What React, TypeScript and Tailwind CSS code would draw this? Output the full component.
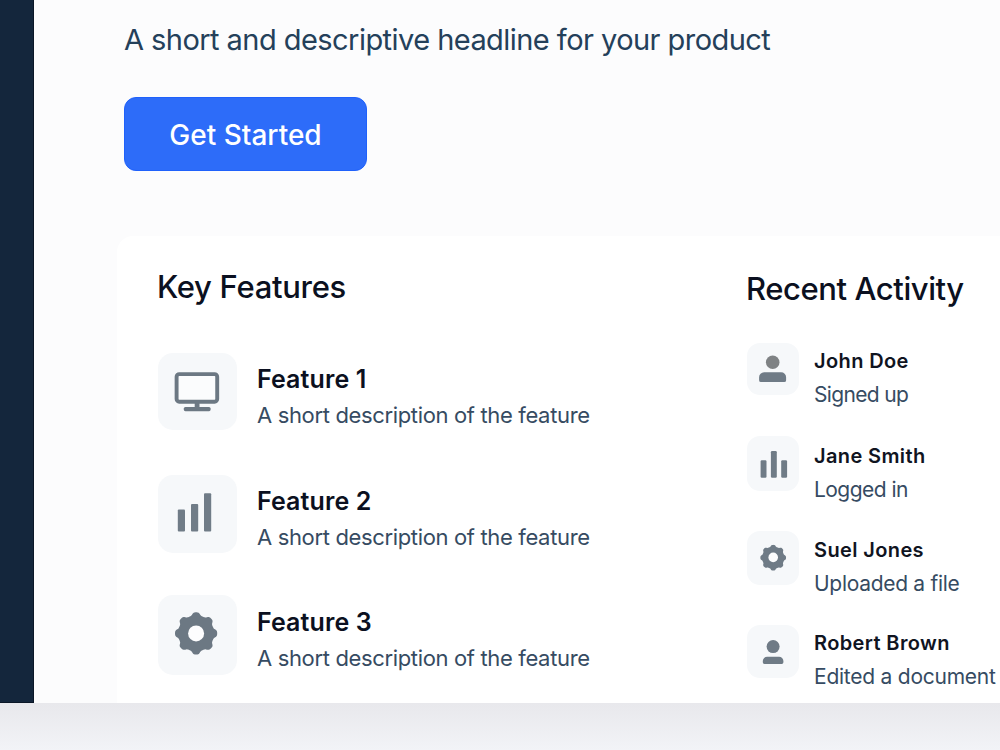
import type { ReactNode } from 'react';

interface Feature {
  title: string;
  icon: ReactNode;
  row: string;
  tile: string;
}

interface Activity {
  name: string;
  action: string;
  icon: ReactNode;
  row: string;
  tile: string;
  text: string;
  tracking: string;
}

// eight-toothed cog outline around (cx, cy)
function cogPath(cx: number, cy: number, inner: number, outer: number) {
  const mid = (inner + outer) / 2;
  const amp = (outer - inner) / 2;
  const points: string[] = [];
  for (let i = 0; i < 192; i++) {
    const a = (i / 192) * Math.PI * 2;
    const r = mid + amp * Math.tanh(1.7 * Math.cos(8 * a));
    points.push(`${(cx + r * Math.cos(a)).toFixed(2)} ${(cy + r * Math.sin(a)).toFixed(2)}`);
  }
  return `M${points.join('L')}Z`;
}

function MonitorIcon() {
  return (
    <svg viewBox="0 0 79 77" className="h-[77px] w-[79px]">
      <rect x="18.6" y="21.1" width="40.6" height="27.6" rx="2.6" fill="#fbfcfd" stroke="#6c7883" strokeWidth="3.9" />
      <rect x="36.7" y="49" width="4.8" height="7" fill="#6c7883" />
      <rect x="25.8" y="54" width="26.8" height="4.2" rx="1.6" fill="#6c7883" />
    </svg>
  );
}

function BarsIcon() {
  return (
    <svg viewBox="0 0 79 78" className="h-[78px] w-[79px]" fill="#707c87">
      <rect x="19.8" y="34.5" width="7.2" height="22" rx="1" />
      <rect x="33" y="29" width="7.2" height="27.5" rx="1" />
      <rect x="46" y="18.2" width="7.2" height="38.3" rx="1" />
    </svg>
  );
}

function CogIcon() {
  return (
    <svg viewBox="0 0 79 80" className="h-[80px] w-[79px]">
      <path d={cogPath(38.1, 38.4, 17.9, 21.2)} fill="#6c7883" />
      <circle cx="38.1" cy="38.4" r="8" fill="#fdfdfe" />
    </svg>
  );
}

function UserIcon() {
  return (
    <svg viewBox="0 0 52 52" className="size-[52px]">
      <circle cx="25.7" cy="19.2" r="6.8" fill="#7f8284" />
      <path d="M12.1 34.2a5 5 0 0 1 5-5h17a5 5 0 0 1 5 5v3a1.9 1.9 0 0 1-1.9 1.9H14a1.9 1.9 0 0 1-1.9-1.9z" fill="#6f7b86" />
    </svg>
  );
}

function SmallBarsIcon() {
  return (
    <svg viewBox="0 0 52 55" className="h-[55px] w-[52px]" fill="#6f7b86">
      <rect x="13.6" y="24.3" width="5.9" height="17.4" rx="1.2" />
      <rect x="23.9" y="15" width="5.9" height="26.7" rx="1.2" />
      <rect x="34.2" y="24.3" width="5.9" height="17.4" rx="1.2" />
    </svg>
  );
}

function SmallCogIcon() {
  return (
    <svg viewBox="0 0 52 54" className="h-[54px] w-[52px]">
      <path d={cogPath(26.2, 26.7, 11, 12.9)} fill="#6f7b86" />
      <circle cx="26.2" cy="26.4" r="4.8" fill="#fbfcfd" />
    </svg>
  );
}

function SmallUserIcon() {
  return (
    <svg viewBox="0 0 52 53" className="h-[53px] w-[52px]" fill="#6f7b86">
      <circle cx="26.1" cy="21.6" r="6.5" />
      <path d="M15.8 36.1a4.4 4.4 0 0 1 4.4-4.4h11.8a4.4 4.4 0 0 1 4.4 4.4v1.2a1.6 1.6 0 0 1-1.6 1.6H17.4a1.6 1.6 0 0 1-1.6-1.6z" />
    </svg>
  );
}

const FEATURES: Feature[] = [
  { title: 'Feature 1', icon: <MonitorIcon />, row: 'h-[122px]', tile: 'h-[77px]' },
  { title: 'Feature 2', icon: <BarsIcon />, row: 'h-[120px]', tile: 'h-[78px]' },
  { title: 'Feature 3', icon: <CogIcon />, row: 'h-[108px] [&_h3]:pt-px', tile: 'h-[80px]' },
];

const ACTIVITY: Activity[] = [
  { name: 'John Doe', action: 'Signed up', icon: <UserIcon />, row: 'h-[93px]', tile: 'h-[52px]', text: 'pt-px', tracking: 'tracking-[-0.65px]' },
  { name: 'Jane Smith', action: 'Logged in', icon: <SmallBarsIcon />, row: 'h-[95px]', tile: 'h-[55px]', text: 'pt-[2.5px]', tracking: 'tracking-[-0.55px]' },
  { name: 'Suel Jones', action: 'Uploaded a file', icon: <SmallCogIcon />, row: 'h-[94px]', tile: 'h-[54px]', text: 'pt-[2px]', tracking: 'tracking-[-0.3px]' },
  { name: 'Robert Brown', action: 'Edited a document', icon: <SmallUserIcon />, row: 'h-[78px]', tile: 'h-[53px]', text: 'pt-px', tracking: 'tracking-[-0.24px]' },
];

function FeatureRow({ feature }: { feature: Feature }) {
  return (
    <li className={`flex items-start gap-5 ${feature.row}`}>
      <div className={`w-[79px] shrink-0 rounded-[15px] bg-[#f6f8fa] ${feature.tile}`}>{feature.icon}</div>
      <div className="pt-2 whitespace-nowrap">
        <h3 className="text-[25px] leading-9 font-semibold tracking-[0.1px] text-[#0b1020]">{feature.title}</h3>
        <p className="text-[22px] leading-9 tracking-[-0.35px] text-[#364b62]">
          A short description of the feature
        </p>
      </div>
    </li>
  );
}

function ActivityRow({ item }: { item: Activity }) {
  return (
    <li className={`flex items-start gap-[15px] ${item.row}`}>
      <div className={`w-[52px] shrink-0 rounded-[13px] bg-[#f6f8fa] ${item.tile}`}>{item.icon}</div>
      <div className={`whitespace-nowrap ${item.text}`}>
        <h3 className="text-[20px] leading-[34px] font-semibold tracking-[0.38px] text-[#10141f]">{item.name}</h3>
        <p className={`text-[21px] leading-[34px] text-[#364b62] ${item.tracking}`}>{item.action}</p>
      </div>
    </li>
  );
}

export default function App() {
  return (
    <div className="flex h-[750px] w-[1000px] flex-col overflow-hidden bg-[#f1f2f6] font-['Inter',sans-serif]">
      <div className="flex h-[703px] shrink-0">
        <aside className="w-[34px] shrink-0 border-r border-b border-[#0b1727] bg-[#14263c]" />

        <main className="flex min-w-0 flex-1 flex-col bg-[#fcfcfd] pt-5">
          <p className="pl-[90px] text-[29px] leading-10 tracking-[-0.55px] whitespace-nowrap text-[#24405a]">
            A short and descriptive headline for your product
          </p>
          <button className="mt-[37px] ml-[90px] h-[74px] w-[243px] shrink-0 rounded-[12px] border border-[#1f61fb] bg-[#2d6cf9] pt-0.5 text-[28px] font-medium text-white">
            Get Started
          </button>

          <div className="mt-[65px] ml-[83px] flex min-h-0 flex-1 rounded-tl-[16px] bg-white">
            <section className="w-[588px] shrink-0 pt-[31px] pl-[41px]">
              <h2 className="-ml-px text-[31px] leading-10 font-medium tracking-[-0.3px] text-[#0b1020]">Key Features</h2>
              <ul className="mt-[46px]">
                {FEATURES.map((feature) => (
                  <FeatureRow key={feature.title} feature={feature} />
                ))}
              </ul>
            </section>

            <section className="min-w-0 flex-1 pt-[33px] pl-[42px]">
              <h2 className="-ml-px text-[31px] leading-10 font-medium tracking-[-0.42px] whitespace-nowrap text-[#0b1020]">
                Recent Activity
              </h2>
              <ul className="mt-[34px]">
                {ACTIVITY.map((item) => (
                  <ActivityRow key={item.name} item={item} />
                ))}
              </ul>
            </section>
          </div>
        </main>
      </div>

      <div className="flex-1 bg-linear-to-b from-[#e8e8ec] to-[#f2f3f7]" />
    </div>
  );
}
